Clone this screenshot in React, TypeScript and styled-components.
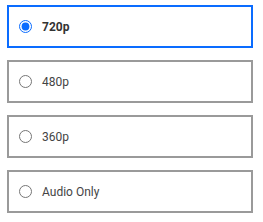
import React, { useState } from "react";
import styled, { createGlobalStyle } from "styled-components";

const GlobalStyle = createGlobalStyle`
  body {
    margin: 0;
    background: #fff;
    font-family: Roboto, "Liberation Sans", Arial, sans-serif;
  }
`;

const List = styled.div`
  display: flex;
  flex-direction: column;
  gap: 12px;
  width: 246px;
  padding: 5px 0 0 7px;
`;

const Option = styled.label<{ $active: boolean }>`
  display: flex;
  align-items: center;
  box-sizing: border-box;
  height: 43px;
  padding-left: 10px;
  border: 2px solid ${(p) => (p.$active ? "#0a6cff" : "#9a9a9a")};
  cursor: pointer;
`;

const Radio = styled.input`
  width: 13px;
  height: 13px;
  margin: 0 10px 0 0;
  accent-color: #0a6cff;
`;

const Text = styled.span<{ $active: boolean }>`
  font-size: 12px;
  color: ${(p) => (p.$active ? "#333" : "#444")};
  font-weight: ${(p) => (p.$active ? 700 : 400)};
`;

const options = ["720p", "480p", "360p", "Audio Only"];

const App = () => {
  const [value, setValue] = useState("720p");
  return (
    <>
      <GlobalStyle />
      <List>
        {options.map((o) => (
          <Option key={o} $active={value === o}>
            <Radio
              type="radio"
              name="quality"
              checked={value === o}
              onChange={() => setValue(o)}
            />
            <Text $active={value === o}>{o}</Text>
          </Option>
        ))}
      </List>
    </>
  );
};

export default App;
